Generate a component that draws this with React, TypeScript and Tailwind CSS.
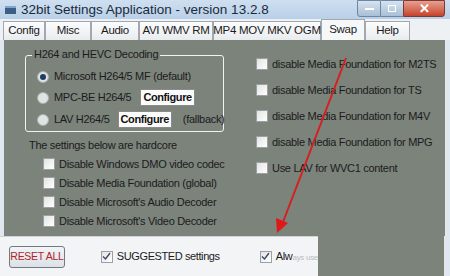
import React from 'react';

const tabs: [string, number][] = [
  ['Config', 42],
  ['Misc', 46],
  ['Audio', 48],
  ['AVI WMV RM', 74],
  ['MP4 MOV MKV OGM', 108],
  ['Swap', 44],
  ['Help', 45],
];

const rightOpts = [
  'disable Media Foundation for M2TS',
  'disable Media Foundation for TS',
  'disable Media Foundation for M4V',
  'disable Media Foundation for MPG',
  'Use LAV for WVC1 content',
];

const hardcore = [
  'Disable Windows DMO video codec',
  'Disable Media Foundation (global)',
  "Disable Microsoft's Audio Decoder",
  "Disable Microsoft's Video Decoder",
];

const Box = ({ checked = false }: { checked?: boolean }) => (
  <span className="w-[12px] h-[12px] border border-[#9aa0a6] bg-gradient-to-br from-[#e2e4e2] to-[#ffffff] flex items-center justify-center shrink-0">
    {checked && (
      <svg width="9" height="9" viewBox="0 0 9 9">
        <path d="M1 4.5 L3.5 7 L8 1" fill="none" stroke="#3a4a6a" strokeWidth="1.4" />
      </svg>
    )}
  </span>
);

const Radio = ({ on = false }: { on?: boolean }) => (
  <span className="w-[12px] h-[12px] rounded-full border border-[#a8b0b0] bg-[#dfe3e2] flex items-center justify-center shrink-0">
    {on && <span className="w-[6px] h-[6px] rounded-full bg-[#1f3d63]" />}
  </span>
);

const Configure = () => (
  <span className="bg-[#fbfbfb] border border-[#8a8a8a] px-[2px] h-[17px] flex items-center text-[11px] font-bold text-[#111111] leading-none tracking-[-0.4px]">
    Configure
  </span>
);

const App: React.FC = () => {
  return (
    <div
      className="w-[450px] h-[276px] overflow-hidden bg-[#dfe8f1] relative text-[#1b1b1b] whitespace-nowrap tracking-[-0.3px]"
      style={{ fontFamily: '"Liberation Sans", Arial, sans-serif' }}
    >
      {/* Title bar */}
      <div className="h-[19px] flex items-center bg-gradient-to-b from-[#cfdff0] to-[#b9d0e8]">
        <span className="ml-[5px] w-[11px] h-[8px] bg-[#3b5f85] border-t-2 border-[#7fa6cc]" />
        <span className="ml-[5px] text-[13.5px] text-[#1a2a3a] leading-none tracking-normal">32bit Settings Application - version 13.2.8</span>
        <div className="ml-auto flex items-start self-start">
          <span className="w-[24px] h-[17px] border border-[#6f86a3] rounded-bl-[3px] bg-gradient-to-b from-[#d6e3f0] to-[#a9bfd6] flex items-center justify-center">
            <span className="w-[9px] h-[2px] bg-white" />
          </span>
          <span className="w-[22px] h-[17px] border-y border-[#6f86a3] bg-gradient-to-b from-[#d6e3f0] to-[#a9bfd6] flex items-center justify-center">
            <span className="w-[8px] h-[7px] border border-white" />
          </span>
          <span className="w-[42px] h-[17px] border border-[#7a3b33] rounded-br-[3px] bg-gradient-to-b from-[#e6a090] to-[#c6402a] flex items-center justify-center text-white text-[13px] font-bold leading-none">
            ✕
          </span>
          <span className="w-[5px]" />
        </div>
      </div>

      {/* Tabs */}
      <div className="h-[21px] bg-[#eef1f4] flex items-end pl-[3px]">
        {tabs.map(([t, w]) => {
          const sel = t === 'Swap';
          return (
            <div
              key={t}
              style={{ width: w }}
              className={`flex items-center justify-center text-[11.5px] leading-none border border-b-0 border-[#a2a8ae] ${
                sel ? 'bg-[#f5f7f9] h-[21px]' : 'h-[19px] bg-gradient-to-b from-[#fbfcfd] to-[#e9ecef]'
              }`}
            >
              {t}
            </div>
          );
        })}
      </div>

      {/* Main gray panel */}
      <div className="mx-[3px] h-[196px] bg-[#7c837b] border-l border-[#dfe4ea] border-r-2 border-r-[#e4e8ec] flex">
        {/* Left column */}
        <div className="w-[244px] pt-[10px] pl-[21px] flex flex-col">
          <div className="relative w-[199px] h-[77px] border border-[#f2f2f2] rounded-[3px] mt-[5px] pt-[13px] pl-[11px] flex flex-col gap-[5px]">
            <span className="absolute -top-[7px] left-[6px] px-[2px] bg-[#7c837b] text-[11px] leading-none">H264 and HEVC Decoding</span>
            <div className="flex items-center gap-[5px] text-[11px] leading-none h-[15px]">
              <Radio on />
              <span>Microsoft H264/5 MF (default)</span>
            </div>
            <div className="flex items-center gap-[5px] text-[11px] leading-none h-[17px]">
              <Radio />
              <span>MPC-BE H264/5</span>
              <span className="ml-[4px]"><Configure /></span>
            </div>
            <div className="flex items-center gap-[5px] text-[11px] leading-none h-[17px]">
              <Radio />
              <span>LAV H264/5</span>
              <span className="ml-[3px]"><Configure /></span>
              <span className="ml-[6px]">(fallback)</span>
            </div>
          </div>
          <div className="mt-[8px] ml-[4px] text-[11px] leading-none">The settings below are hardcore</div>
          <div className="mt-[6px] ml-[18px] flex flex-col gap-[5px]">
            {hardcore.map((h) => (
              <div key={h} className="flex items-center gap-[4px] text-[11px] leading-none h-[14px]">
                <Box />
                <span>{h}</span>
              </div>
            ))}
          </div>
        </div>

        {/* Right column */}
        <div className="pt-[17px] pl-[8px] flex flex-col gap-[12px]">
          {rightOpts.map((o) => (
            <div key={o} className="flex items-center gap-[4px] text-[11px] leading-none h-[14px]">
              <Box />
              <span>{o}</span>
            </div>
          ))}
        </div>
      </div>

      {/* Bottom bar */}
      <div className="flex h-[40px]">
        <div className="w-[318px] bg-[#f3f4f5] flex items-center pl-[9px] border-t border-[#d0d4d8]">
          <span className="w-[64px] h-[22px] rounded-[3px] border border-[#6f7a86] bg-gradient-to-b from-[#f2f4f6] to-[#dde2e7] flex items-center justify-center text-[10.5px] text-[#b0252a] leading-none">
            RESET ALL
          </span>
          <span className="ml-[36px] flex items-center gap-[4px] text-[11px] leading-none tracking-[-0.4px]">
            <Box checked />
            <span>SUGGESTED settings</span>
          </span>
          <span className="ml-[40px] flex items-center gap-[4px] text-[11px] leading-none">
            <Box checked />
            <span>
              Alw<span className="text-[#b8bcbe] text-[8px]">ays use</span>
            </span>
          </span>
        </div>
        <div className="flex-1 bg-[#7c837b] mr-[4px] border-r-2 border-[#e4e8ec]" />
      </div>

      {/* Red arrow annotation */}
      <svg className="absolute left-0 top-0 pointer-events-none" width="450" height="276">
        <line x1="346" y1="58" x2="283" y2="222" stroke="#d42020" strokeWidth="2" />
        <polygon points="277,233 276,218 288,223" fill="#e01818" />
      </svg>
    </div>
  );
};

export default App;
